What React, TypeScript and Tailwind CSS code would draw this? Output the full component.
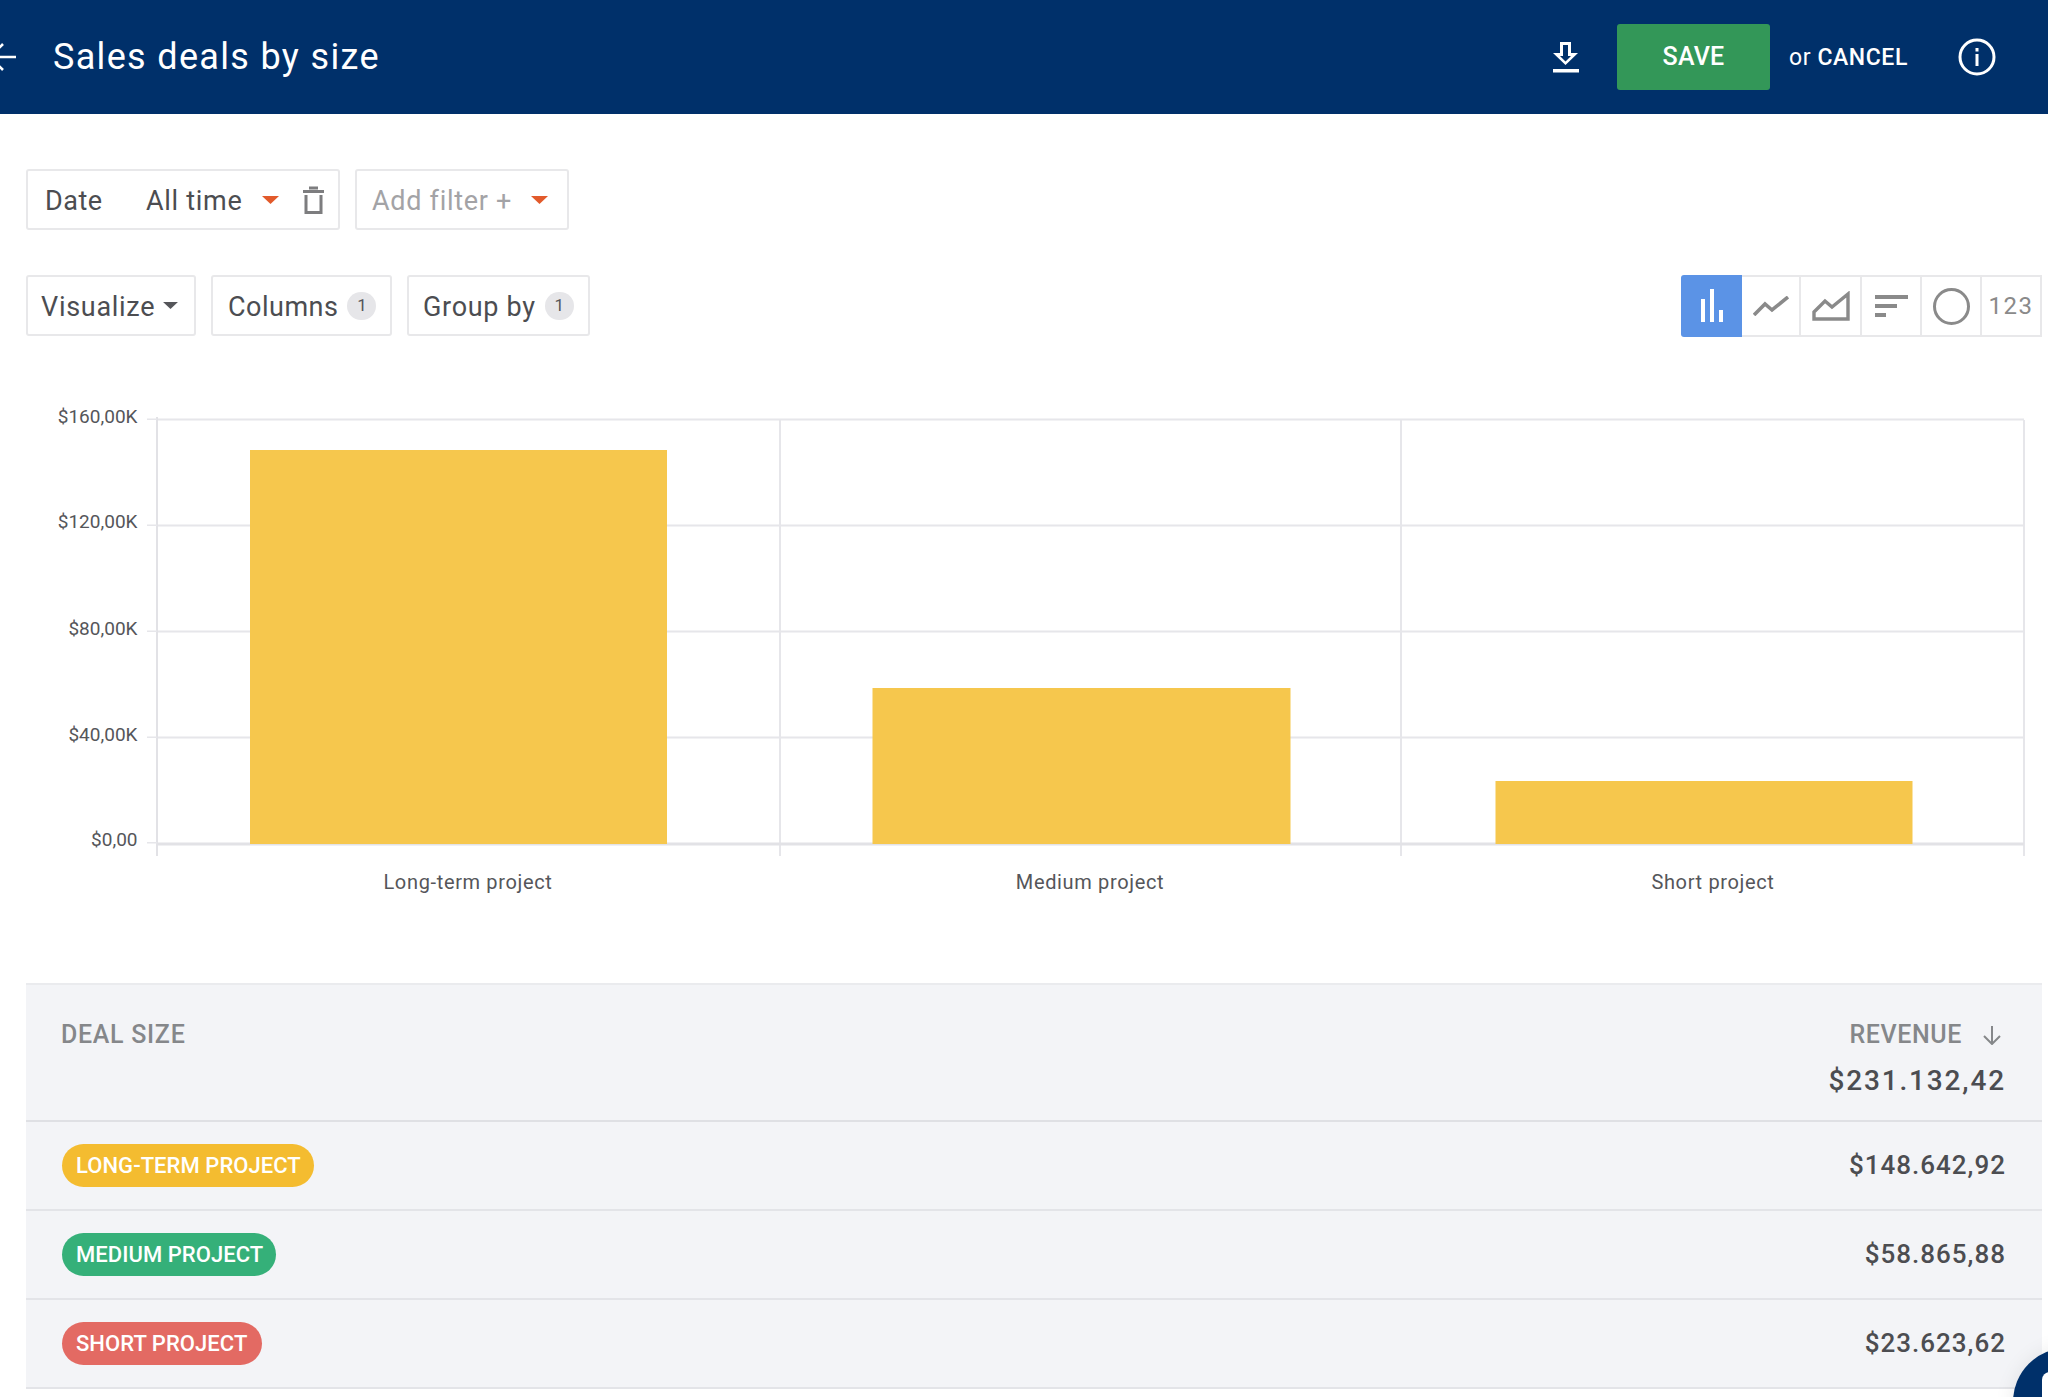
const gridRows = [419.5, 525.5, 631.5, 737.5];
const gridCols = [780, 1401, 2024];
const ticks = [
  { label: "$160,00K", y: 417 },
  { label: "$120,00K", y: 522 },
  { label: "$80,00K", y: 629 },
  { label: "$40,00K", y: 735 },
  { label: "$0,00", y: 840 },
];
const bars = [
  { x: 250, w: 417, top: 450, label: "Long-term project", cx: 468 },
  { x: 872.5, w: 418, top: 688, label: "Medium project", cx: 1090 },
  { x: 1495.5, w: 417, top: 781, label: "Short project", cx: 1713 },
];
const rows = [
  { name: "LONG-TERM PROJECT", value: "$148.642,92", pill: "w-[252px] bg-[#f4bc30]" },
  { name: "MEDIUM PROJECT", value: "$58.865,88", pill: "w-[214px] bg-[#35b079]" },
  { name: "SHORT PROJECT", value: "$23.623,62", pill: "w-[200px] bg-[#e36a63]" },
];

function Caret({ className }: { className: string }) {
  return (
    <svg viewBox="0 0 17 8" className={className}>
      <path d="M0 0h17L8.5 8z" fill="currentColor" />
    </svg>
  );
}

function Count() {
  return (
    <span className="flex h-[28px] w-[29px] items-center justify-center rounded-full bg-[#e6e6e9] text-[17px] text-[#55565a]">
      1
    </span>
  );
}

function ChartTypes() {
  return (
    <div className="flex h-[62px] items-stretch text-[#8a8a8a]">
      <div className="flex w-[61px] items-center justify-center rounded-l-[3px] bg-[#5b93e6]">
        <svg viewBox="0 0 24 34" className="h-[34px] w-[24px] fill-white">
          <rect x="1" y="10" width="4" height="23" />
          <rect x="10" y="0" width="4" height="33" />
          <rect x="19" y="21" width="4" height="12" />
        </svg>
      </div>
      <div className="flex w-[59px] items-center justify-center border-y-2 border-r-2 border-[#e8e8ea]">
        <svg viewBox="0 0 36 20" className="h-[20px] w-[36px]" fill="none" stroke="currentColor" strokeWidth="3.6">
          <path d="M1 19 12 8l7 6L35 1" />
        </svg>
      </div>
      <div className="flex w-[61px] items-center justify-center border-y-2 border-r-2 border-[#e8e8ea]">
        <svg viewBox="0 0 38 30" className="h-[30px] w-[38px]" fill="none" stroke="currentColor" strokeWidth="3.4">
          <path d="M2 28h34V3L20 16l-7-6L2 21z" />
        </svg>
      </div>
      <div className="flex w-[60px] flex-col items-start justify-center gap-[5px] border-y-2 border-r-2 border-[#e8e8ea] pl-[13px]">
        <span className="h-[4px] w-[33px] bg-current" />
        <span className="h-[4px] w-[22px] bg-current" />
        <span className="h-[4px] w-[11px] bg-current" />
      </div>
      <div className="flex w-[60px] items-center justify-center border-y-2 border-r-2 border-[#e8e8ea]">
        <span className="h-[37px] w-[37px] rounded-full border-[3.5px] border-current" />
      </div>
      <div className="flex w-[60px] items-center justify-center border-y-2 border-r-2 border-[#e8e8ea] text-[24px] tracking-[1.5px]">
        123
      </div>
    </div>
  );
}

function Chart() {
  return (
    <svg viewBox="0 336 2048 647" className="block h-[647px] w-[2048px] font-[Roboto,sans-serif]">
      {gridRows.map((y) => (
        <rect key={y} x="157" y={y - 1} width="1867" height="2" fill="#e6e6ea" />
      ))}
      {gridCols.map((x) => (
        <rect key={x} x={x - 1} y="420" width="2" height="436" fill="#e6e6ea" />
      ))}
      <rect x="156" y="417" width="2" height="439" fill="#e2e2e6" />
      <rect x="157" y="842.5" width="1867" height="3" fill="#e2e2e6" />
      {ticks.map((t, i) => (
        <g key={t.label}>
          <rect x="147" y={[418.5, 524.5, 630.5, 736.5, 842][i]} width="10" height="1.5" fill="#e6e6ea" />
          <text x="137.5" y={t.y + 6} textAnchor="end" className="fill-[#55565a] text-[19px]">
            {t.label}
          </text>
        </g>
      ))}
      {bars.map((b) => (
        <g key={b.label}>
          <rect x={b.x} y={b.top} width={b.w} height={844 - b.top} fill="#f6c74d" />
          <text x={b.cx} y="889" textAnchor="middle" className="fill-[#55565a] text-[20px] tracking-[0.65px]">
            {b.label}
          </text>
        </g>
      ))}
    </svg>
  );
}

export default function App() {
  return (
    <div className="relative h-[1397px] w-[2048px] overflow-hidden bg-white font-[Roboto,sans-serif] text-[#4c4d51]">
      <header className="flex h-[114px] items-center bg-[#00306a] text-white">
        <svg viewBox="0 0 16 30" className="h-[30px] w-[16px]" fill="none" stroke="white" strokeWidth="2.6">
          <path d="M16 15H-6M3 2-10 15 3 28" />
        </svg>
        <h1 className="ml-[37px] text-[36px] font-normal tracking-[1.33px]">Sales deals by size</h1>
        <svg viewBox="0 0 26 32" className="ml-auto h-[32px] w-[26px]">
          <path d="M7 1h11v11h7L12.500 24 0 12h7z" fill="white" />
          <path d="M10 4h5v11h3l-5.500 5.500L7 15h3z" fill="#00306a" />
          <rect x="0" y="28" width="26" height="3.500" fill="white" />
        </svg>
        <button className="ml-[38px] h-[66px] w-[153px] rounded-[3px] bg-[#339758] text-[25px] font-medium tracking-[0.2px] text-white">
          SAVE
        </button>
        <span className="ml-[19px] pt-[2px] text-[23px] tracking-[0.6px]">
          or <span className="font-medium">CANCEL</span>
        </span>
        <svg viewBox="0 0 38 38" className="mr-[52px] ml-[50px] h-[38px] w-[38px]" fill="none" stroke="white" strokeWidth="3">
          <circle cx="19" cy="19" r="17" />
          <rect x="17.500" y="16" width="3" height="12" fill="white" stroke="none" />
          <rect x="17.500" y="10" width="3" height="3.500" fill="white" stroke="none" />
        </svg>
      </header>

      <div className="flex h-[222px] flex-col gap-[45px] px-[26px] pt-[55px]">
        <div className="flex gap-[15px] text-[27px] leading-none">
          <div className="flex h-[61px] w-[314px] items-center rounded-[3px] border-2 border-[#e8e8ea] pl-[17px]">
            <span className="w-[101px] pt-[4px] tracking-[0.5px]">Date</span>
            <span className="pt-[4px] tracking-[0.7px]">All time</span>
            <Caret className="ml-[20px] h-[8px] w-[17px] text-[#e25a2b]" />
            <svg viewBox="0 0 21 28" className="ml-[24px] h-[28px] w-[21px]" fill="none" stroke="#7d7d7f" strokeWidth="3">
              <path d="M0 5.500h21M6 2h9" />
              <path d="M3 9v17.500h15V9" />
            </svg>
          </div>
          <div className="flex h-[61px] w-[214px] items-center rounded-[3px] border-2 border-[#e8e8ea] pl-[15px] text-[#a3a3a6]">
            <span className="pt-[4px] tracking-[0.7px]">Add filter +</span>
            <Caret className="ml-[19px] h-[8px] w-[17px] text-[#e25a2b]" />
          </div>
        </div>
        <div className="-mr-[20px] flex items-start justify-between">
          <div className="flex gap-[15px] text-[27px] leading-none">
            <div className="flex h-[61px] w-[170px] items-center rounded-[3px] border-2 border-[#e8e8ea] pl-[13px]">
              <span className="pt-[3px] tracking-[0.7px]">Visualize</span>
              <Caret className="ml-[8px] h-[7px] w-[15px] text-[#55565a]" />
            </div>
            <div className="flex h-[61px] w-[181px] items-center gap-[9px] rounded-[3px] border-2 border-[#e8e8ea] pl-[15px]">
              <span className="pt-[3px] tracking-[0.5px]">Columns</span>
              <Count />
            </div>
            <div className="flex h-[61px] w-[183px] items-center gap-[9px] rounded-[3px] border-2 border-[#e8e8ea] pl-[14px]">
              <span className="pt-[3px] tracking-[0.7px]">Group by</span>
              <Count />
            </div>
          </div>
          <ChartTypes />
        </div>
      </div>

      <Chart />

      <div className="ml-[26px] w-[2016px] bg-[#f3f4f7]">
        <div className="flex h-[139px] items-start justify-between border-y-2 border-t-[#eaebee] border-b-[#dfe0e4] pr-[36px] pl-[35px] pt-[35px]">
          <span className="text-[25px] leading-[30px] font-medium tracking-[0.7px] text-[#85878a]">DEAL SIZE</span>
          <div className="flex flex-col items-end">
            <div className="flex items-center gap-[20px] text-[#85878a]">
              <span className="text-[25px] leading-[30px] font-medium tracking-[0.6px]">REVENUE</span>
              <svg viewBox="0 0 20 20" className="mr-[4px] h-[20px] w-[20px]" fill="none" stroke="currentColor" strokeWidth="2">
                <path d="M10 1v18M2 11l8 8 8-8" />
              </svg>
            </div>
            <span className="mt-[14px] text-[28px] leading-[34px] font-medium tracking-[1.85px]">$231.132,42</span>
          </div>
        </div>
        {rows.map((r) => (
          <div key={r.name} className="flex h-[89px] items-center justify-between border-b-2 border-[#e3e4e8] pr-[36px] pl-[36px]">
            <span className={`flex h-[43px] items-center rounded-full pl-[14px] text-[22px] font-medium tracking-[0.05px] text-white ${r.pill}`}>
              {r.name}
            </span>
            <span className="text-[26px] font-medium tracking-[1px]">{r.value}</span>
          </div>
        ))}
      </div>

      <div className="absolute top-[1348px] left-[2013px] h-[108px] w-[108px] rounded-full bg-[#00306a] shadow-[0_0_20px_rgba(0,0,0,0.08)]">
        <div className="mt-[24px] ml-[29px] h-[60px] w-[40px] rounded-[8px] bg-white" />
      </div>
    </div>
  );
}
